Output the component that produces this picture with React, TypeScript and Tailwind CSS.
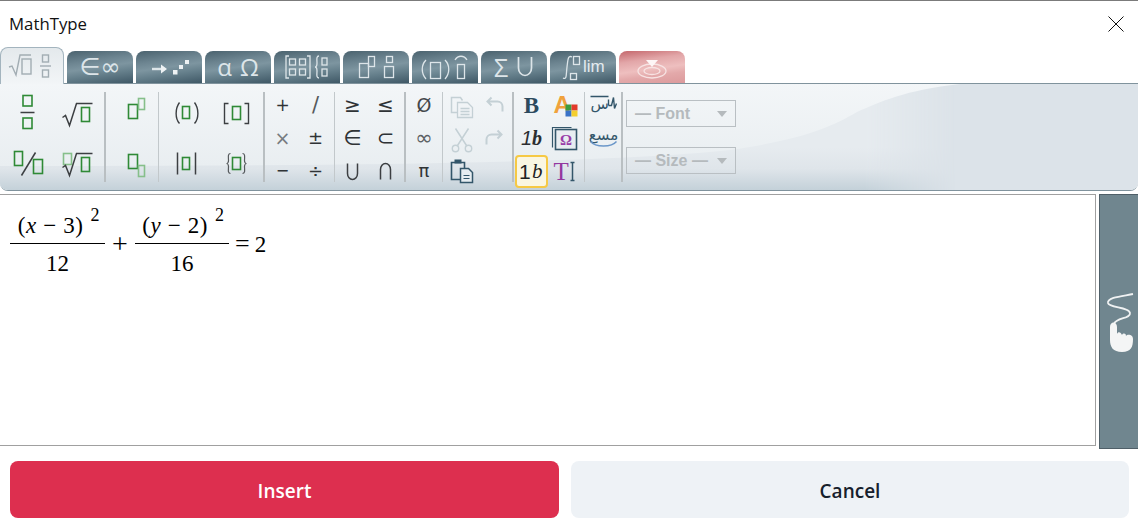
import React from "react";

const G = "#2f8a36";
const L = "#86bf8a";
const D = "#3c3f42";
const F = "#c4d0d5";
const S = "#33566a";
const T = "#dde5e9";

function Ic({ children, size = 33 }: { children: React.ReactNode; size?: number }) {
  const h = size / 2;
  return (
    <svg width={size} height={size} viewBox={`${-h} ${-h} ${size} ${size}`} fill="none" className="overflow-visible">
      {children}
    </svg>
  );
}

function Bx({ x, y, w, h, c = G, sw = 1.6 }: { x: number; y: number; w: number; h: number; c?: string; sw?: number }) {
  return <rect x={x} y={y} width={w} height={h} stroke={c} strokeWidth={sw} fill="none" />;
}

function Sym({ children, c = "text-[#2f3336]", s = "text-[16px]" }: { children: React.ReactNode; c?: string; s?: string }) {
  return <span className={`font-['DejaVu_Sans',sans-serif] leading-none ${s} ${c}`}>{children}</span>;
}

function Sep({ wide }: { wide?: boolean }) {
  return <div className={`h-[90px] shrink-0 ${wide ? "w-[2px] bg-[#b9bfc2]" : "w-[1px] bg-[#c2c8cb]"}`} />;
}

function Radical() {
  return <path d="M-15 5 L-12 3 L-8 13 L-1 -9 H15" stroke={D} strokeWidth={1.5} />;
}

function Cell({ children }: { children?: React.ReactNode }) {
  return <div className="flex items-center justify-center">{children}</div>;
}

function Tab({ children, variant = "dark" }: { children: React.ReactNode; variant?: "dark" | "red" }) {
  const bg =
    variant === "red"
      ? "bg-[linear-gradient(172deg,#c4666b_0%,#e2a6a8_30%,#eebfbf_55%,#e3a9aa_72%,#dc9a9c_100%)]"
      : "bg-[linear-gradient(172deg,#4a626e_0%,#6d8591_32%,#7d95a0_50%,#66808c_68%,#3f5866_100%)]";
  return (
    <div className={`w-[66px] h-[32px] rounded-t-[8px] flex items-center justify-center ${bg}`}>
      {children}
    </div>
  );
}

function TabSvg({ children }: { children: React.ReactNode }) {
  return (
    <svg width={66} height={32} viewBox="0 0 66 32" fill="none" stroke={T} strokeWidth={1.3}>
      {children}
    </svg>
  );
}

function Select({ label, trail }: { label: string; trail?: boolean }) {
  return (
    <div className="w-[110px] h-[27px] border border-[#b9bfc3] flex items-center pl-[8px] pr-[8px] font-['Liberation_Sans',sans-serif] font-bold text-[16px] text-[#b5babd]">
      <span className="whitespace-pre">{trail ? `— ${label} —` : `— ${label}`}</span>
      <div className="ml-auto w-0 h-0 border-x-[5px] border-x-transparent border-t-[6px] border-t-[#b5babd]" />
    </div>
  );
}

function ToolbarBackground() {
  return (
    <svg className="absolute inset-0 w-full h-full" viewBox="0 0 1138 106" preserveAspectRatio="none">
      <defs>
        <linearGradient id="low" x1="0" y1="0" x2="0" y2="1">
          <stop offset="0.6" stopColor="#e6ebef" />
          <stop offset="0.8" stopColor="#dfe5ea" />
          <stop offset="1" stopColor="#c4d1d9" />
        </linearGradient>
        <linearGradient id="top" x1="0" y1="0" x2="0" y2="1">
          <stop offset="0" stopColor="#f3f6f8" />
          <stop offset="1" stopColor="#e9eef1" />
        </linearGradient>
        <linearGradient id="fade" x1="0" y1="0" x2="1" y2="0">
          <stop offset="0.76" stopColor="#fff" />
          <stop offset="0.84" stopColor="#000" />
        </linearGradient>
        <mask id="m">
          <rect x="0" y="0" width="1138" height="106" fill="url(#fade)" />
        </mask>
      </defs>
      <rect x="0" y="0" width="1138" height="106" fill="#dce3e9" />
      <rect x="0" y="0" width="1138" height="106" fill="url(#low)" mask="url(#m)" />
      <path d="M0 0 H960 C905 6 880 18 857 28 C830 44 800 56 730 66 C600 80 300 82 0 82 Z" fill="url(#top)" />
    </svg>
  );
}

function Frac({ num, den, w }: { num: React.ReactNode; den: string; w: string }) {
  return (
    <div className={`flex flex-col items-center ${w}`}>
      <div className="h-[31px] flex items-end leading-none whitespace-pre">{num}</div>
      <div className="w-full h-[1px] bg-black mt-[6px]" />
      <div className="mt-[8px] leading-none h-[24px]">{den}</div>
    </div>
  );
}

function Num({ v, n }: { v: string; n: string }) {
  return (
    <span className="relative tracking-[0.6px] pl-[1px]">
      (<i>{v}</i> − {n})
      <span className="text-[18px] relative -top-[12px] left-[2px]"> 2</span>
    </span>
  );
}

export default function App() {
  return (
    <div className="w-[1138px] h-[528px] bg-white overflow-hidden flex flex-col border-t border-[#7b7b7b] font-['Open_Sans',sans-serif]">
      {/* Title */}
      <div className="h-[46px] shrink-0 flex items-center justify-between pl-[9px] pr-[14px]">
        <span className="text-[16.8px] text-[#111] -mt-[1px]">MathType</span>
        <svg width="16" height="16" viewBox="0 0 16 16" className="-mt-[1px]">
          <path d="M0.5 0.5 L15.5 15.5 M15.5 0.5 L0.5 15.5" stroke="#111" strokeWidth="1" />
        </svg>
      </div>

      {/* Tabs */}
      <div className="relative z-10 h-[36px] shrink-0 flex items-end gap-[3px]">
        <div className="w-[64px] h-[37px] -mb-[1px] rounded-t-[8px] border border-b-0 border-[#a3b4be] bg-[linear-gradient(#e4e9ec,#f2f5f7)] shrink-0">
          <svg width="62" height="36" viewBox="0 0 62 36" fill="none" stroke="#a2adb3" strokeWidth="1.4">
            <path d="M8 19 L11 18 L15 27 L19 7 H30" />
            <rect x="21" y="11" width="9" height="15" />
            <rect x="41.5" y="7" width="6" height="7" />
            <path d="M39 18 H50" />
            <rect x="41.5" y="22" width="6" height="7" />
          </svg>
        </div>
        <Tab>
          <span className="font-['DejaVu_Sans',sans-serif] text-[24px] leading-[28px] text-[#dde5e9]">∈∞</span>
        </Tab>
        <Tab>
          <TabSvg>
            <path d="M16 18 H29" strokeWidth={2.4} />
            <path d="M25 13.5 L31 18 L25 22.5 Z" fill="#eef2f4" stroke="none" />
            <rect x="37" y="19" width="4.5" height="4.5" fill="#eef2f4" stroke="none" />
            <rect x="43" y="14" width="4" height="4" fill="#eef2f4" stroke="none" />
            <rect x="49" y="9" width="4" height="4" fill="#eef2f4" stroke="none" />
          </TabSvg>
        </Tab>
        <Tab>
          <span className="flex items-center gap-[8px] font-['Open_Sans',sans-serif] text-[24px] leading-[28px] text-[#dde5e9]">
            <span>α</span>
            <span>Ω</span>
          </span>
        </Tab>
        <Tab>
          <TabSvg>
            <path d="M15 5 H12 V27 H15 M33 5 H36 V27 H33" />
            <rect x="15.5" y="8" width="6" height="6" />
            <rect x="25.5" y="8" width="6" height="6" />
            <rect x="15.5" y="18" width="6" height="6" />
            <rect x="25.5" y="18" width="6" height="6" />
            <path d="M45 5 C42 5 43 9 43 12 C43 15 42 16 41 16 C42 16 43 17 43 20 C43 23 42 27 45 27" />
            <rect x="48" y="7" width="5" height="7" />
            <rect x="48" y="18" width="5" height="7" />
          </TabSvg>
        </Tab>
        <Tab>
          <TabSvg>
            <rect x="16.5" y="12.5" width="9" height="14" />
            <rect x="25.5" y="5.5" width="6" height="10" />
            <rect x="43.5" y="5.5" width="6" height="6" />
            <rect x="41.5" y="15.5" width="9" height="11" />
          </TabSvg>
        </Tab>
        <Tab>
          <TabSvg>
            <path d="M14 9 C9 14 9 22 14 28 M33 9 C38 14 38 22 33 28" />
            <rect x="18.5" y="11.5" width="10" height="16" />
            <path d="M43 9 C46 4 52 4 55 9" />
            <rect x="45.5" y="13.5" width="7" height="14" />
          </TabSvg>
        </Tab>
        <Tab>
          <div className="flex items-center gap-[9px] -ml-[1px]">
            <span className="font-['Open_Sans',sans-serif] text-[25px] leading-[30px] text-[#dde5e9]">Σ</span>
            <svg width="16" height="20" viewBox="0 0 16 20" fill="none">
              <path d="M1.5 0 V11 A6.5 7.5 0 0 0 14.5 11 V0" stroke={T} strokeWidth="1.7" />
            </svg>
          </div>
        </Tab>
        <Tab>
          <div className="relative w-[66px] h-[32px]">
            <TabSvg>
              <path d="M13 27 C17 29 16 24 17 16 C18 8 18 4 22 6" />
              <rect x="23.5" y="5.5" width="6" height="8" />
              <rect x="20.5" y="22.5" width="6" height="6" />
            </TabSvg>
            <span className="absolute left-[33px] top-[7px] font-['Liberation_Sans',sans-serif] text-[17px] leading-none text-[#e3eaee]">lim</span>
          </div>
        </Tab>
        <Tab variant="red">
          <svg width={66} height={32} viewBox="0 0 66 32" fill="none">
            <ellipse cx="33" cy="20" rx="14" ry="7" stroke="#f7e3e3" strokeWidth="1.3" />
            <ellipse cx="33" cy="20" rx="8" ry="3.5" stroke="#f7e3e3" strokeWidth="1.3" />
            <path d="M27 9 H39 L33 16 Z" fill="#fdf6f6" />
          </svg>
        </Tab>
      </div>

      {/* Toolbar */}
      <div className="relative h-[108px] shrink-0 rounded-b-[8px] border-y border-[#80939d] overflow-hidden">
        <ToolbarBackground />
        <div className="relative h-full flex items-center">
          <div className="w-[104px] h-[100px] shrink-0 pl-[2px] grid grid-cols-[50px_50px] grid-rows-[50px_50px]">
            <Cell>
              <Ic>
                <Bx x={-4.5} y={-17} w={9} h={10.5} />
                <path d="M-7 0 H7" stroke={D} strokeWidth={1.4} />
                <Bx x={-4.5} y={5.5} w={9} h={10.5} />
              </Ic>
            </Cell>
            <Cell>
              <Ic>
                <Radical />
                <Bx x={4} y={-5} w={8} h={14} />
              </Ic>
            </Cell>
            <Cell>
              <Ic>
                <Bx x={-13} y={-11} w={8} h={14} />
                <path d="M-6 13 L8 -10" stroke={D} strokeWidth={1.5} />
                <Bx x={6} y={-3} w={9} h={14} />
              </Ic>
            </Cell>
            <Cell>
              <Ic>
                <Bx x={-14} y={-9} w={8} h={11} c={L} />
                <Radical />
                <Bx x={4} y={-5} w={8} h={14} />
              </Ic>
            </Cell>
          </div>
          <Sep wide />
          <div className="w-[52px] shrink-0 pl-[2px] grid grid-rows-[53px_53px]">
            <Cell>
              <Ic>
                <Bx x={-5} y={-6} w={9} h={14} />
                <Bx x={5} y={-12} w={6} h={11} c={L} />
              </Ic>
            </Cell>
            <Cell>
              <Ic>
                <Bx x={-5} y={-9} w={9} h={14} />
                <Bx x={5} y={2} w={6} h={11} c={L} />
              </Ic>
            </Cell>
          </div>
          <Sep />
          <div className="w-[104px] shrink-0 pl-[2px] grid grid-cols-[50px_50px] grid-rows-[50px_50px]">
            <Cell>
              <Ic>
                <path d="M-7 -10 C-11.5 -4 -11.5 6 -7 11 M8 -10 C12.5 -4 12.5 6 8 11" stroke={D} strokeWidth={1.4} />
                <Bx x={-4} y={-6} w={7} h={12} />
              </Ic>
            </Cell>
            <Cell>
              <Ic>
                <path d="M-8 -9 H-12 V11 H-8 M8 -9 H12 V11 H8" stroke={D} strokeWidth={1.4} />
                <Bx x={-4} y={-6} w={8} h={13} />
              </Ic>
            </Cell>
            <Cell>
              <Ic>
                <path d="M-9 -10 V12 M9 -10 V12" stroke={D} strokeWidth={1.5} />
                <Bx x={-4} y={-5} w={7} h={12} />
              </Ic>
            </Cell>
            <Cell>
              <Ic>
                <path d="M-6 -9 C-9 -9 -8 -5 -8 -2 C-8 0 -9 1 -10 1 C-9 1 -8 2 -8 4 C-8 7 -9 11 -6 11 M6 -9 C9 -9 8 -5 8 -2 C8 0 9 1 10 1 C9 1 8 2 8 4 C8 7 9 11 6 11" stroke="#55595c" strokeWidth={1.2} />
                <Bx x={-4} y={-5} w={8} h={12} />
              </Ic>
            </Cell>
          </div>
          <Sep wide />
          <div className="w-[69px] mt-[2px] shrink-0 pl-[1px] grid grid-cols-[33px_33px] grid-rows-[33px_33px_33px]">
            <Cell><Sym s="text-[17px]">+</Sym></Cell>
            <Cell><Sym s="text-[21px]" c="text-[#55595c]">/</Sym></Cell>
            <Cell><Sym s="text-[19px]" c="text-[#777c80]">×</Sym></Cell>
            <Cell><Sym s="text-[18px]">±</Sym></Cell>
            <Cell><Sym>−</Sym></Cell>
            <Cell><Sym s="text-[18px]">÷</Sym></Cell>
          </div>
          <Sep />
          <div className="w-[69px] mt-[2px] shrink-0 pl-[1px] grid grid-cols-[33px_33px] grid-rows-[33px_33px_33px]">
            <Cell><Sym s="text-[20px]">≥</Sym></Cell>
            <Cell><Sym s="text-[20px]">≤</Sym></Cell>
            <Cell><Sym s="text-[21px]">∈</Sym></Cell>
            <Cell><Sym s="text-[21px]">⊂</Sym></Cell>
            <Cell>
              <Ic>
                <path d="M-5 -8 V2 A5 6 0 0 0 5 2 V-8" stroke={D} strokeWidth={1.5} />
              </Ic>
            </Cell>
            <Cell>
              <Ic>
                <path d="M-5 8 V-2 A5 6 0 0 1 5 -2 V8" stroke={D} strokeWidth={1.5} />
              </Ic>
            </Cell>
          </div>
          <Sep wide />
          <div className="w-[36px] mt-[2px] shrink-0 grid grid-cols-[36px] grid-rows-[33px_33px_33px]">
            <Cell><Sym s="text-[19px]" c="text-[#44484b]">Ø</Sym></Cell>
            <Cell><Sym s="text-[21px]" c="text-[#5b6063]">∞</Sym></Cell>
            <Cell><Sym s="text-[18px]">π</Sym></Cell>
          </div>
          <Sep />
          <div className="w-[69px] mt-[2px] shrink-0 pl-[1px] grid grid-cols-[33px_34px] grid-rows-[33px_33px_33px]">
            <Cell>
              <Ic>
                <path d="M-3 7 H-9 V-8 H0 L2 -5" stroke={F} strokeWidth={1.5} />
                <path d="M-3 -3 H7 L12 2 V12 H-3 Z M0 3 H9 M0 6 H9 M0 9 H9" stroke={F} strokeWidth={1.3} />
              </Ic>
            </Cell>
            <Cell>
              <Ic>
                <path d="M-3 -8 L-7 -4 L-3 0 M-7 -4 H3 A5 5 0 0 1 8 1 V6" stroke={F} strokeWidth={2} />
              </Ic>
            </Cell>
            <Cell>
              <Ic>
                <path d="M-5 -10 L6 7 M8 -10 L-3 7" stroke={F} strokeWidth={1.5} />
                <circle cx="-5" cy="10" r="3.2" stroke={F} strokeWidth={1.4} />
                <circle cx="8" cy="10" r="3.2" stroke={F} strokeWidth={1.4} />
              </Ic>
            </Cell>
            <Cell>
              <Ic>
                <path d="M3 -8 L7 -4 L3 0 M7 -4 H-3 A5 5 0 0 0 -8 1 V6" stroke={F} strokeWidth={2} />
              </Ic>
            </Cell>
            <Cell>
              <Ic>
                <path d="M0 8 H-9 V-9 H4 V-3" stroke={S} strokeWidth={1.6} />
                <rect x="-6" y="-12" width="7" height="4" fill={S} />
                <path d="M0 -3 H8 L12 1 V11 H0 Z" stroke={S} strokeWidth={1.5} fill="#e6edf1" />
                <path d="M3 4 H9 M3 7 H9" stroke={S} strokeWidth={1.2} />
              </Ic>
            </Cell>
          </div>
          <Sep wide />
          <div className="w-[70px] mt-[2px] shrink-0 pl-[1px] grid grid-cols-[33px_33px] grid-rows-[33px_33px_33px]">
            <Cell>
              <span className="font-['Liberation_Serif',serif] font-bold text-[23px] leading-none text-[#2c4a5e]">B</span>
            </Cell>
            <Cell>
              <Ic>
                <text x="-11" y="7" fontFamily="Liberation Sans" fontWeight="700" fontSize="24" fill="#f0a23c">A</text>
                <rect x="1" y="-1" width="6" height="6" fill="#3e9b3f" />
                <rect x="7" y="-1" width="6" height="6" fill="#e23a2a" />
                <rect x="1" y="5" width="6" height="6" fill="#3a73c8" />
                <rect x="7" y="5" width="6" height="6" fill="#f4cf2e" />
              </Ic>
            </Cell>
            <Cell>
              <span className="text-[20px] leading-none italic text-[#2b2e31]">
                <span className="font-['Liberation_Sans',sans-serif]">1</span>
                <span className="font-['Liberation_Serif',serif] font-bold">b</span>
              </span>
            </Cell>
            <Cell>
              <Ic>
                <path d="M-12 9 V-11 H7" stroke={S} strokeWidth={1.2} />
                <rect x="-9" y="-9" width="21" height="20" stroke={S} strokeWidth={1.6} fill="#e8edf1" />
                <text x="1.5" y="6" textAnchor="middle" fontFamily="Liberation Serif" fontWeight="700" fontSize="15" fill="#9a3ea8">Ω</text>
              </Ic>
            </Cell>
            <Cell>
              <div className="w-[33px] h-[33px] rounded-[4px] border-2 border-[#f6c945] bg-[#faf6e2] flex items-center justify-center text-[21px] leading-none text-[#222] tracking-[1.5px]">
                <span className="font-['Liberation_Sans',sans-serif]">1</span>
                <span className="font-['Liberation_Serif',serif] italic">b</span>
              </div>
            </Cell>
            <Cell>
              <Ic>
                <text x="-11" y="8" fontFamily="Liberation Serif" fontSize="25" fill="#93379f">T</text>
                <path d="M6 -9 H10 M8 -9 V9 M6 9 H10" stroke={S} strokeWidth={1.5} />
              </Ic>
            </Cell>
          </div>
          <Sep />
          <div className="w-[36px] mt-[2px] shrink-0 grid grid-cols-[36px] grid-rows-[33px_33px_33px]">
            <Cell>
              <Ic>
                <path d="M-13 -9 H5" stroke={S} strokeWidth={1.4} />
                <text x="-13" y="3" fontFamily="DejaVu Sans" fontSize="15" fill={S}>س</text>
                <path d="M5 -6 V0 M5 0 H8 L10 -8 L11 3 L13 -2" stroke={S} strokeWidth={1.4} />
              </Ic>
            </Cell>
            <Cell>
              <Ic>
                <text x="0" y="1" textAnchor="middle" fontFamily="DejaVu Sans" fontSize="15" fill={S}>مسع</text>
                <path d="M-13 3 C-8 9 8 9 13 3" stroke="#6b97c9" strokeWidth={1.4} />
              </Ic>
            </Cell>
            <Cell />
          </div>
          <Sep wide />
          <div className="ml-[3px] flex flex-col gap-[20px]">
            <Select label="Font" />
            <Select label="Size" trail />
          </div>
        </div>
      </div>

      {/* Editor + side handle */}
      <div className="mt-[3px] flex gap-[3px] shrink-0">
        <div className="w-[1096px] h-[252px] border border-l-0 border-[#a0a0a0] pl-[10px] pt-[11px] shrink-0">
          <div className="flex font-['Liberation_Serif',serif] text-[23px] text-black">
            <Frac w="w-[95px]" den="12" num={<Num v="x" n="3" />} />
            <div className="w-[30px] text-center pt-[24px] text-[28px] leading-none">+</div>
            <Frac w="w-[94px]" den="16" num={<Num v="y" n="2" />} />
            <div className="pl-[6px] pt-[25px] leading-none flex items-baseline gap-[5px]">
              <span className="text-[26px] leading-none">=</span>
              <span>2</span>
            </div>
          </div>
        </div>
        <div className="w-[39px] h-[255px] bg-[#70868f] border-l border-t border-b border-[#4f5f68] flex items-center justify-center shrink-0">
          <svg width="38" height="72" viewBox="0 0 38 72" fill="none" className="mt-[14px]">
            <path d="M33 1 C24 3 7 4 8 10 C9 15 29 14 30 20 C31 26 16 24 14 31" stroke="#f0f2f3" strokeWidth="1.8" />
            <path d="M10 34 C10 28 17 28 17 34 V41 C18 38 21 39 22 42 C23 40 26 40 26 43 C27 41 33 41 33 46 C33 54 31 59 22 59 C13 59 10 54 10 47 Z" fill="#f4f5f5" />
          </svg>
        </div>
      </div>

      {/* Buttons */}
      <div className="mt-[12px] pl-[10px] pr-[9px] flex gap-[12px] shrink-0">
        <button className="w-[549px] h-[57px] pt-[4px] rounded-[8px] bg-[#dd2f4f] text-white text-[19px] font-semibold">Insert</button>
        <button className="flex-1 h-[57px] pt-[4px] rounded-[8px] bg-[#eef2f6] text-[#16202c] text-[19px] font-semibold">Cancel</button>
      </div>
    </div>
  );
}
